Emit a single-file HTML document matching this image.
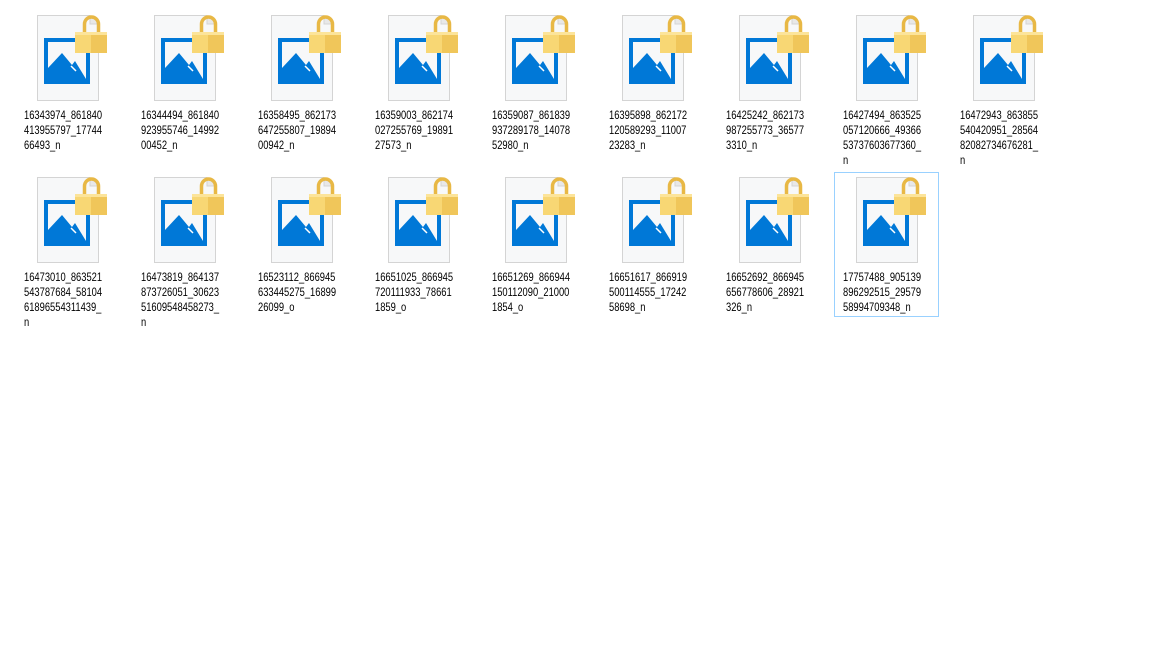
<!DOCTYPE html>
<html><head><style>
body{margin:0;width:1152px;height:648px;background:#fff;position:relative;overflow:hidden;font-family:"Liberation Sans",sans-serif}
.c{position:absolute;width:104px;height:150px}
.c svg{position:absolute;left:0;top:0}
.t{position:absolute;left:4px;top:98px;white-space:nowrap;font-size:12px;line-height:15px;color:#000;transform:scaleX(0.78);transform-origin:0 0}
.sel{border:1px solid #99d1ff;box-sizing:border-box}
</style></head><body>
<svg width="0" height="0" style="position:absolute"><defs>
<g id="ic">
<path d="M17.5 5.5H70l8.5 8.5V90.5H17.5Z" fill="#f7f8f9" stroke="#d4d4d4"/>
<path d="M70 5.5V14h8.5" fill="#e8e8e8" stroke="#d4d4d4"/>
<rect x="26" y="30" width="42" height="42" fill="none" stroke="#0078d7" stroke-width="4"/>
<path d="M28 72V58l14-15 10 12 3-4 11 18v3Z" fill="#0078d7"/>
<path d="M51 56l5 5" stroke="#fff" stroke-width="1.5"/>
<path d="M64.5 22v-8a7 7 0 0 1 14 0v8" fill="none" stroke="#e8b845" stroke-width="3.5"/>
<rect x="55" y="22" width="32" height="21" fill="#f8d774"/>
<rect x="71" y="22" width="16" height="21" fill="#f0c65a"/>
<rect x="55" y="22" width="32" height="3" fill="#fce49a"/>
</g></defs></svg>

<div class="c" style="left:20px;top:10px"><svg width="104" height="100"><use href="#ic"/></svg><div class="t">16343974_861840<br>413955797_17744<br>66493_n</div></div>
<div class="c" style="left:137px;top:10px"><svg width="104" height="100"><use href="#ic"/></svg><div class="t">16344494_861840<br>923955746_14992<br>00452_n</div></div>
<div class="c" style="left:254px;top:10px"><svg width="104" height="100"><use href="#ic"/></svg><div class="t">16358495_862173<br>647255807_19894<br>00942_n</div></div>
<div class="c" style="left:371px;top:10px"><svg width="104" height="100"><use href="#ic"/></svg><div class="t">16359003_862174<br>027255769_19891<br>27573_n</div></div>
<div class="c" style="left:488px;top:10px"><svg width="104" height="100"><use href="#ic"/></svg><div class="t">16359087_861839<br>937289178_14078<br>52980_n</div></div>
<div class="c" style="left:605px;top:10px"><svg width="104" height="100"><use href="#ic"/></svg><div class="t">16395898_862172<br>120589293_11007<br>23283_n</div></div>
<div class="c" style="left:722px;top:10px"><svg width="104" height="100"><use href="#ic"/></svg><div class="t">16425242_862173<br>987255773_36577<br>3310_n</div></div>
<div class="c" style="left:839px;top:10px"><svg width="104" height="100"><use href="#ic"/></svg><div class="t">16427494_863525<br>057120666_49366<br>53737603677360_<br>n</div></div>
<div class="c" style="left:956px;top:10px"><svg width="104" height="100"><use href="#ic"/></svg><div class="t">16472943_863855<br>540420951_28564<br>82082734676281_<br>n</div></div>

<div class="c" style="left:20px;top:172px"><svg width="104" height="100"><use href="#ic"/></svg><div class="t">16473010_863521<br>543787684_58104<br>61896554311439_<br>n</div></div>
<div class="c" style="left:137px;top:172px"><svg width="104" height="100"><use href="#ic"/></svg><div class="t">16473819_864137<br>873726051_30623<br>51609548458273_<br>n</div></div>
<div class="c" style="left:254px;top:172px"><svg width="104" height="100"><use href="#ic"/></svg><div class="t">16523112_866945<br>633445275_16899<br>26099_o</div></div>
<div class="c" style="left:371px;top:172px"><svg width="104" height="100"><use href="#ic"/></svg><div class="t">16651025_866945<br>720111933_78661<br>1859_o</div></div>
<div class="c" style="left:488px;top:172px"><svg width="104" height="100"><use href="#ic"/></svg><div class="t">16651269_866944<br>150112090_21000<br>1854_o</div></div>
<div class="c" style="left:605px;top:172px"><svg width="104" height="100"><use href="#ic"/></svg><div class="t">16651617_866919<br>500114555_17242<br>58698_n</div></div>
<div class="c" style="left:722px;top:172px"><svg width="104" height="100"><use href="#ic"/></svg><div class="t">16652692_866945<br>656778606_28921<br>326_n</div></div>
<div class="sel" style="position:absolute;left:834px;top:172px;width:105px;height:145px"></div>
<div class="c" style="left:839px;top:172px"><svg width="104" height="100"><use href="#ic"/></svg><div class="t">17757488_905139<br>896292515_29579<br>58994709348_n</div></div>
</body></html>
